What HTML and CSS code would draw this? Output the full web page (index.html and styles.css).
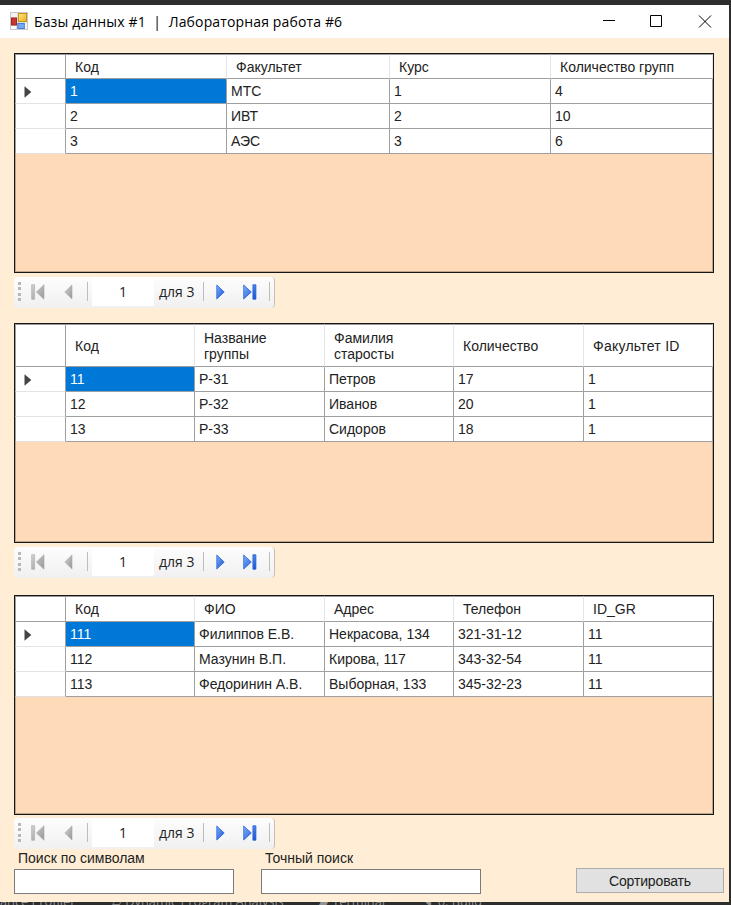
FILE: index.html
```html
<!DOCTYPE html>
<html lang="ru">
<head>
<meta charset="utf-8">
<title>Базы данных #1 | Лабораторная работа #6</title>
<link rel="stylesheet" href="styles.css">
</head>
<body>
<svg class="defs" width="0" height="0">
  <defs>
    <linearGradient id="gray" x1="0" y1="0" x2="1" y2="1"><stop offset="0" stop-color="#d2d2d2"/><stop offset="1" stop-color="#969696"/></linearGradient>
    <linearGradient id="blue" x1="0" y1="0" x2="1" y2="1"><stop offset="0" stop-color="#82b4ff"/><stop offset="1" stop-color="#124bd0"/></linearGradient>
    <linearGradient id="gold" x1="0" y1="0" x2="1" y2="1"><stop offset="0" stop-color="#ffe98a"/><stop offset="1" stop-color="#e9ae14"/></linearGradient>
    <symbol id="first" viewBox="0 0 14 16"><path d="M.6 .7h3v14.6h-3z M13 .7v14.6L5.4 8z" fill="url(#gray)" stroke="#aaa" stroke-width=".6"/></symbol>
    <symbol id="prev" viewBox="0 0 9 16"><path d="M8 .9v14.2L.8 8z" fill="url(#gray)" stroke="#aaa" stroke-width=".6"/></symbol>
    <symbol id="next" viewBox="0 0 9 16"><path d="M.8 1v14L8.2 8z" fill="url(#blue)" stroke="#2463d8" stroke-width=".8"/></symbol>
    <symbol id="last" viewBox="0 0 14 16"><path d="M.7 1v14L8.3 8z M9.9 .8h3v14.4h-3z" fill="url(#blue)" stroke="#2463d8" stroke-width=".8"/></symbol>
    <symbol id="arrow" viewBox="0 0 8 12"><path d="M.5 .2v11.6L7.3 6z" fill="#444"/></symbol>
  </defs>
</svg>
<div class="window">
  <header class="titlebar">
    <svg class="app-icon" width="18" height="18" viewBox="0 0 18 18">
      <rect x=".5" y=".5" width="17" height="17" fill="#dedede" stroke="#c6c6c6"/>
      <rect x="1" y="1" width="6" height="4" fill="#f4f4f4"/><rect x="1" y="14" width="5" height="3" fill="#fff"/><rect x="15" y="11" width="2" height="6" fill="#f4f4f4"/>
      <rect x="1.5" y="6" width="5" height="7" fill="#c93830" stroke="#a32520"/>
      <rect x="8.5" y="1.5" width="8" height="8" fill="url(#gold)" stroke="#c99516"/>
      <rect x="7.8" y="11.5" width="6.5" height="5" fill="#78a8f5" stroke="#477ddb"/>
    </svg>
    <h1 class="title">Базы данных #1&nbsp; |&nbsp; Лабораторная работа #6</h1>
    <svg class="controls" width="110" height="14" viewBox="0 0 110 14" fill="none" stroke="#000">
      <path d="M1 5.5h12M48.5 .5h11v11h-11z"/><path d="M97 .5l12 12M109 .5L97 12.5"/>
    </svg>
  </header>
  <main class="form">
    <section class="table faculties">
      <div class="head corner"></div><div class="head">Код</div><div class="head">Факультет</div><div class="head">Курс</div><div class="head">Количество групп</div>
      <div class="marker"><svg width="8" height="12"><use href="#arrow"/></svg></div><div class="cell selected">1</div><div class="cell">МТС</div><div class="cell">1</div><div class="cell">4</div>
      <div class="marker"></div><div class="cell">2</div><div class="cell">ИВТ</div><div class="cell">2</div><div class="cell">10</div>
      <div class="marker"></div><div class="cell">3</div><div class="cell">АЭС</div><div class="cell">3</div><div class="cell">6</div>
    </section>
    <nav class="navigator">
      <i class="grip"></i><svg class="first" width="14" height="16"><use href="#first"/></svg><svg class="prev" width="9" height="16"><use href="#prev"/></svg><i class="sep s1"></i>
      <span class="position">1</span><span class="count">для 3</span><i class="sep"></i>
      <svg class="next" width="9" height="16"><use href="#next"/></svg><svg class="last" width="14" height="16"><use href="#last"/></svg><i class="sep"></i>
    </nav>
    <section class="table groups">
      <div class="head corner"></div><div class="head">Код</div><div class="head">Название<br>группы</div><div class="head">Фамилия<br>старосты</div><div class="head">Количество</div><div class="head spaced">Факультет ID</div>
      <div class="marker"><svg width="8" height="12"><use href="#arrow"/></svg></div><div class="cell selected">11</div><div class="cell">Р-31</div><div class="cell">Петров</div><div class="cell">17</div><div class="cell">1</div>
      <div class="marker"></div><div class="cell">12</div><div class="cell">Р-32</div><div class="cell">Иванов</div><div class="cell">20</div><div class="cell">1</div>
      <div class="marker"></div><div class="cell">13</div><div class="cell">Р-33</div><div class="cell">Сидоров</div><div class="cell">18</div><div class="cell">1</div>
    </section>
    <nav class="navigator">
      <i class="grip"></i><svg class="first" width="14" height="16"><use href="#first"/></svg><svg class="prev" width="9" height="16"><use href="#prev"/></svg><i class="sep s1"></i>
      <span class="position">1</span><span class="count">для 3</span><i class="sep"></i>
      <svg class="next" width="9" height="16"><use href="#next"/></svg><svg class="last" width="14" height="16"><use href="#last"/></svg><i class="sep"></i>
    </nav>
    <section class="table students">
      <div class="head corner"></div><div class="head">Код</div><div class="head">ФИО</div><div class="head">Адрес</div><div class="head">Телефон</div><div class="head">ID_GR</div>
      <div class="marker"><svg width="8" height="12"><use href="#arrow"/></svg></div><div class="cell selected">111</div><div class="cell">Филиппов Е.В.</div><div class="cell">Некрасова, 134</div><div class="cell">321-31-12</div><div class="cell">11</div>
      <div class="marker"></div><div class="cell">112</div><div class="cell">Мазунин В.П.</div><div class="cell">Кирова, 117</div><div class="cell">343-32-54</div><div class="cell">11</div>
      <div class="marker"></div><div class="cell">113</div><div class="cell">Федоринин А.В.</div><div class="cell">Выборная, 133</div><div class="cell">345-32-23</div><div class="cell">11</div>
    </section>
    <nav class="navigator">
      <i class="grip"></i><svg class="first" width="14" height="16"><use href="#first"/></svg><svg class="prev" width="9" height="16"><use href="#prev"/></svg><i class="sep s1"></i>
      <span class="position">1</span><span class="count">для 3</span><i class="sep"></i>
      <svg class="next" width="9" height="16"><use href="#next"/></svg><svg class="last" width="14" height="16"><use href="#last"/></svg><i class="sep"></i>
    </nav>
    <div class="search">
      <label class="field">Поиск по символам<input type="text"></label>
      <label class="field">Точный поиск<input type="text"></label>
      <button class="sort" type="button">Сортировать</button>
    </div>
  </main>
</div>
<footer class="status"><span class="s-a">ance Profiler</span><span class="s-b">▱ Dynamic Program Analysis</span><span class="s-c">▰ Terminal</span><span class="s-d">◥&nbsp; 0: Build</span></footer>
</body>
</html>
```
FILE: styles.css
```css
* { box-sizing: border-box; }
body {
  margin: 0; width: 731px; height: 905px; padding: 5px 2px 0 0; overflow: hidden;
  background: #2d2d2d; color: #222; font: 14px/16px "Liberation Sans", sans-serif;
}
.defs { position: absolute; }
.window { height: 897px; background: #ffeed5; }
.titlebar { display: flex; align-items: center; height: 33px; padding: 0 17px 0 10px; background: #fff; }
.app-icon { margin: -1px 6px 0 0; }
.title { flex: 1; margin: 0; font: 400 14px/20px "Open Sans", sans-serif; letter-spacing: .14px; color: #000; white-space: nowrap; }
.form { padding: 15px 15px 0 14px; }
.table {
  display: grid; align-content: start; width: 700px; height: 220px;
  border: 1px solid #161616; background: #ffdab9; box-shadow: inset 0 0 0 1px #bca58f;
}
.faculties { grid-template-columns: 51px 161px 163px 161px 162px; grid-template-rows: 25px repeat(3, 25px); }
.groups, .students { grid-template-columns: 51px 129px 130px 129px 130px 129px; }
.groups { grid-template-rows: 43px repeat(3, 25px); }
.students { grid-template-rows: 26px repeat(3, 25px); margin-top: 17px; }
.head {
  display: flex; align-items: center; padding-left: 9px; background: #fff; white-space: nowrap;
  border-right: 1px solid #e5e5e5; border-bottom: 1px solid #a0a0a0; border-top: 1px solid #999;
}
.spaced { letter-spacing: .25px; }
.corner, .marker { border-left: 1px solid #a0a0a0; }
.corner { border-right-color: #a0a0a0; }
.marker {
  display: flex; align-items: center; padding: 1px 0 0 8px; background: #fff;
  border-right: 1px solid #a0a0a0; border-bottom: 1px solid #e3e3e3;
}
.cell {
  padding: 4px 0 0 4px; background: #fff; white-space: nowrap;
  border-right: 1px solid #a0a0a0; border-bottom: 1px solid #a0a0a0;
}
.selected { background: #0078d7; color: #fff; }
.navigator {
  display: flex; align-items: center; width: 261px; height: 31px; margin: 4px 0 15px; padding: 0 0 2px 4px;
  border-radius: 4px; border-right: 1px solid #c4c0b8;
  background: linear-gradient(#fdfdfd, #f0f0f0); color: #222;
}
.students + .navigator { margin-top: 3px; }
.grip { width: 3px; height: 19px; margin-right: 10px; background: repeating-linear-gradient(#b8b8b8 0 3px, transparent 3px 5.3px); }
.prev { margin-left: 19px; }
.sep { width: 1px; height: 19px; background: #bdbdbd; }
.s1 { margin-left: 14px; }
.position { width: 62px; height: 29px; margin-left: 4px; background: #fff; line-height: 29px; text-align: center; }
.position, .count { font-family: "Open Sans", sans-serif; font-size: 14px; }
.count { width: 49px; padding-left: 5px; white-space: nowrap; }
.next { margin-left: 12px; }
.last { margin: 0 12px 0 18px; }
.search { display: flex; margin-top: -14px; align-items: flex-start; }
.field { display: block; width: 220px; margin-right: 27px; text-indent: 4px; }
.field input { display: block; width: 220px; height: 25px; margin: 3px 0 0; border: 1px solid #7a7a7a; background: #fff; }
.sort { width: 148px; height: 25px; margin: 18px 0 0 68px; padding: 0; border: 1px solid #adadad; background: #e1e1e1; color: #222; font: inherit; letter-spacing: -.15px; flex: none; }
.status { display: flex; height: 3px; overflow: hidden; color: #929292; font: 12.8px/10px "Open Sans", sans-serif; white-space: nowrap; }
.status span { margin-top: -6px; }
.s-a { width: 112px; }
.s-b { width: 207px; }
.s-c { width: 102px; }
```
